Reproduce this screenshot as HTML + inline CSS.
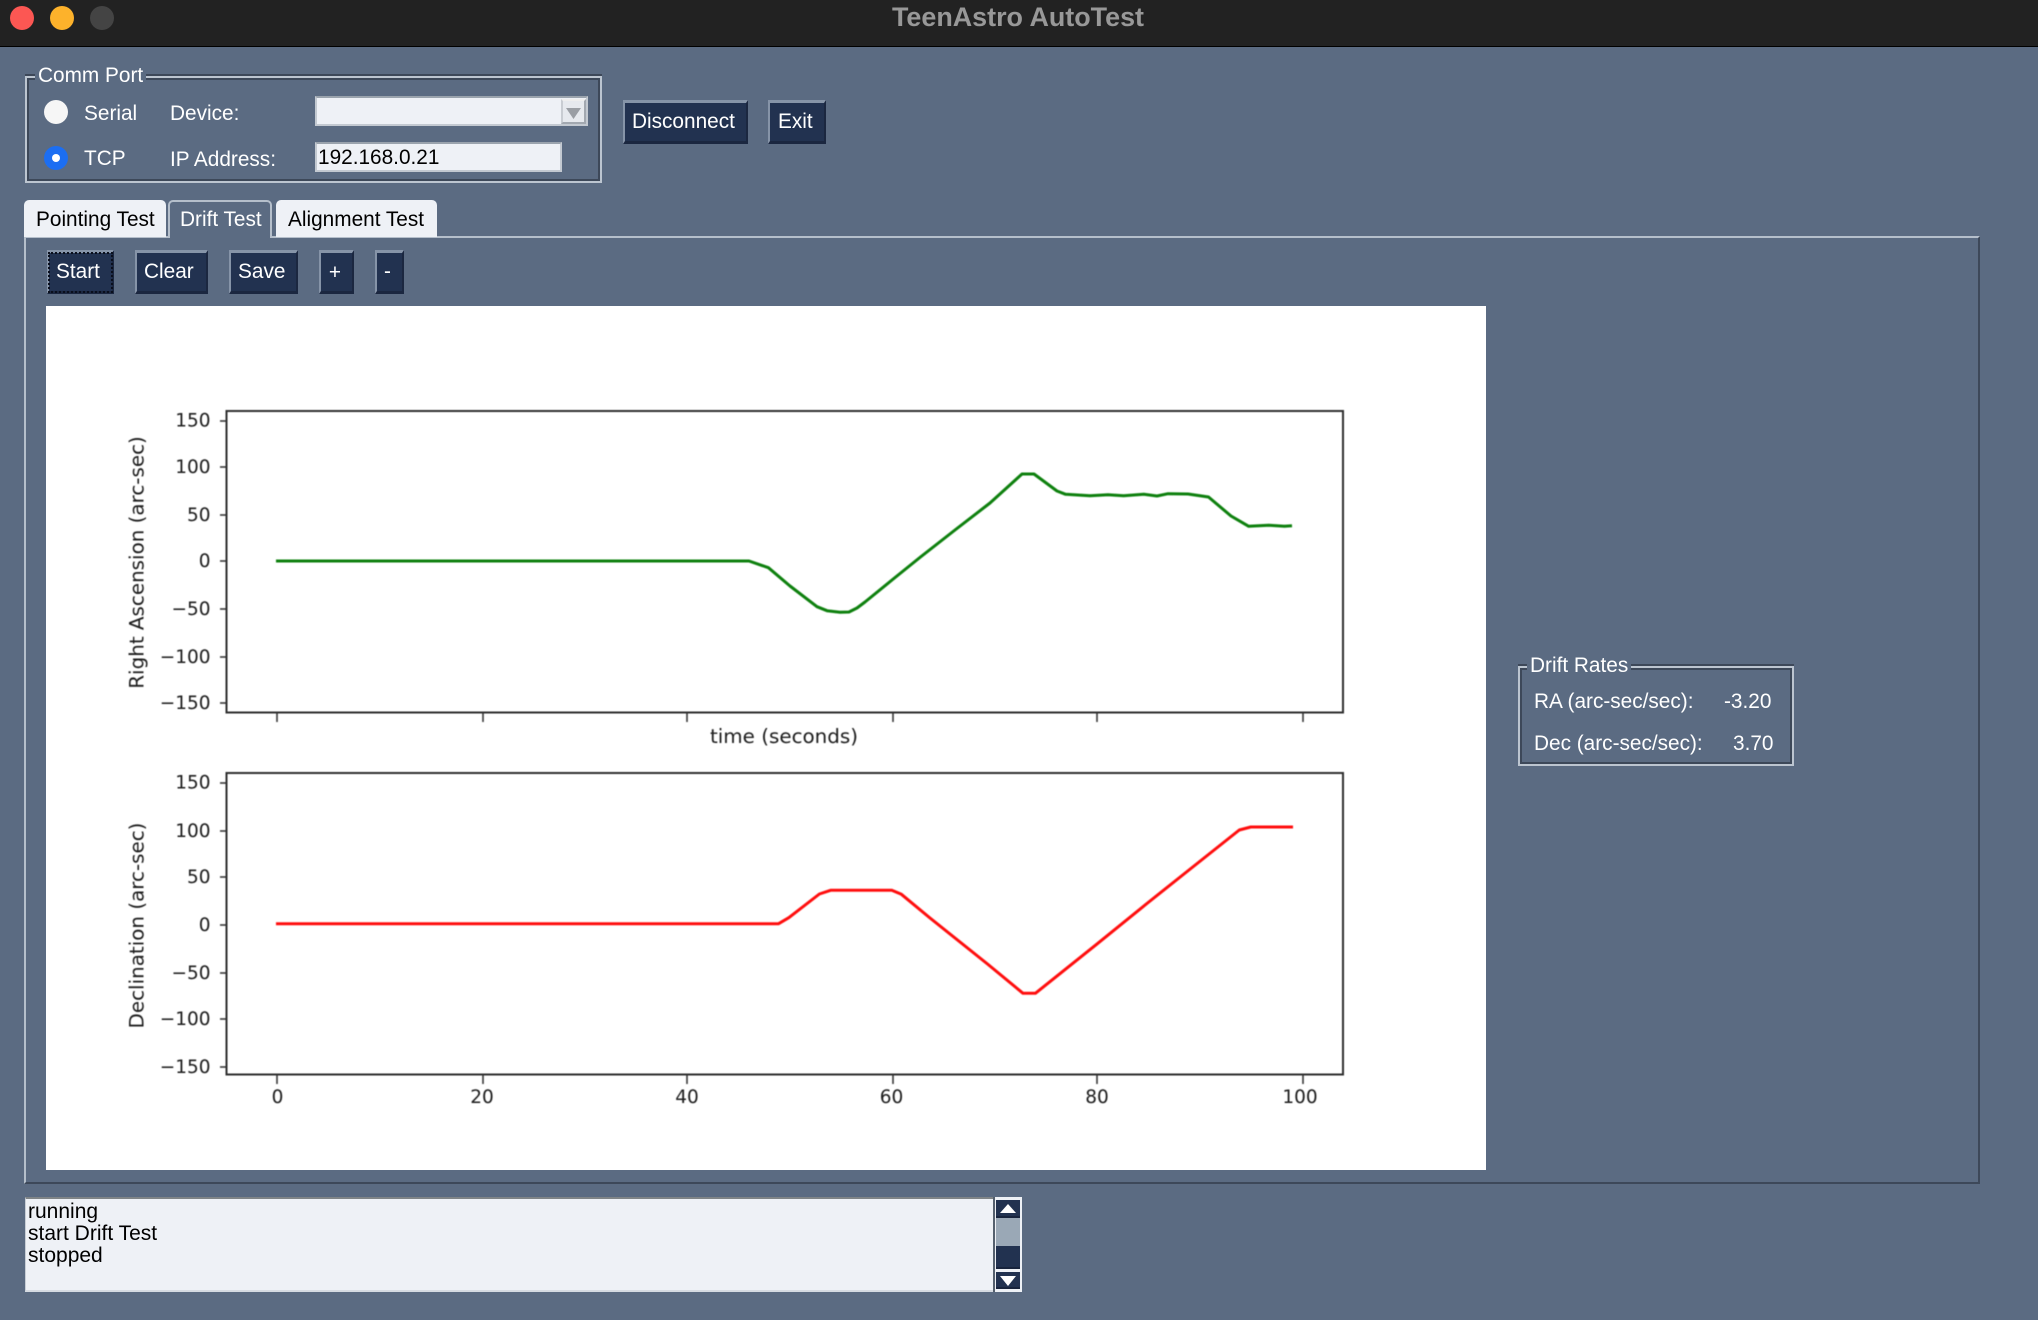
<!DOCTYPE html>
<html><head><meta charset="utf-8"><title>TeenAstro AutoTest</title>
<style>
html,body{margin:0;padding:0;width:2038px;height:1320px;overflow:hidden;background:#5b6b82}
body{position:relative;font-family:"Liberation Sans",sans-serif;font-size:20.8px;color:#fff}
div,span{position:absolute;box-sizing:border-box}
.t{white-space:nowrap;line-height:26px;height:26px}
.frame{border:2px solid #bcc5d0;border-top-color:#bcc5d0;box-shadow:inset 2px 2px 0 #3d4859,-0px -2px 0 #3d4859,inset -2px -2px 0 #3d4859}
.lab{background:#5b6b82;padding:0 3px;white-space:nowrap;line-height:26px;height:26px}
.btn{background:#223250;border-style:solid;border-width:3px 2px 3px 2px;border-color:#8694a8 #1b2740 #1b2740 #8694a8}
.k{color:#000}
.radio{width:24px;height:24px;border-radius:50%}
.tab{border-radius:5px 5px 0 0;top:200px;height:37px}
</style></head><body>

<div style="left:0;top:0;width:2038px;height:46px;background:#222"></div>
<div style="left:0;top:46px;width:2038px;height:1px;background:#000"></div>
<div class="radio" style="left:10px;top:6px;background:#fc5753"></div>
<div class="radio" style="left:50px;top:6px;background:#fdb22b"></div>
<div class="radio" style="left:90px;top:6px;background:#444"></div>
<div class="t" style="left:0;width:2036px;text-align:center;top:3px;font-weight:bold;font-size:26.900px;line-height:28px;height:28px;color:#989898">TeenAstro AutoTest</div>

<!-- Comm Port -->
<div class="frame" style="left:25px;top:76px;width:577px;height:107px"></div>
<div class="lab" style="left:35px;top:63px">Comm Port</div>
<div class="radio" style="left:44px;top:100px;background:#f6f6f6"></div>
<div class="t" style="left:84px;top:101px">Serial</div>
<div class="t" style="left:170px;top:101px">Device:</div>
<div style="left:315px;top:96px;width:273px;height:30px;background:#eef1f6;border:2px solid #c3c9d1;border-top-color:#9aa3ad"></div>
<div style="left:561px;top:99px;width:25px;height:25px;background:#e6e9ee;border:2px solid #a2a8b0;border-top-color:#eee;border-left-color:#c8ccd2"></div>
<svg style="position:absolute;left:561px;top:99px" width="25" height="25"><path d="M5 9H20L12.500 20Z" fill="#9a9ea4"/></svg>
<div class="radio" style="left:44px;top:146px;background:#1c6ef2"></div>
<div style="left:52px;top:154px;width:8px;height:8px;border-radius:50%;background:#fff"></div>
<div class="t" style="left:84px;top:146px">TCP</div>
<div class="t" style="left:170px;top:147px">IP Address:</div>
<div style="left:315px;top:142px;width:247px;height:30px;background:#eef1f6;border:2px solid #c3c9d1;border-top-color:#9aa3ad"></div>
<div class="t k" style="left:318px;top:145px">192.168.0.21</div>

<div class="btn" style="left:623px;top:100px;width:125px;height:44px"></div>
<div class="t" style="left:632px;top:109px">Disconnect</div>
<div class="btn" style="left:768px;top:100px;width:58px;height:44px"></div>
<div class="t" style="left:778px;top:109px">Exit</div>

<!-- Notebook -->
<div style="left:24px;top:236px;width:1956px;height:948px;border:2px solid;border-color:#b5bfcb #3d4859 #3d4859 #b5bfcb"></div>
<div class="tab" style="left:24px;width:142px;background:#eef1f6"></div>
<div class="t k" style="left:36px;top:207px">Pointing Test</div>
<div class="tab" style="left:168px;width:104px;height:38px;background:#5b6b82;border:2px solid #b5bfcb;border-bottom:none"></div>
<div class="t" style="left:180px;top:207px">Drift Test</div>
<div class="tab" style="left:276px;width:161px;background:#eef1f6"></div>
<div class="t k" style="left:288px;top:207px">Alignment Test</div>

<div class="btn" style="left:47px;top:250px;width:67px;height:44px"></div>
<div style="left:48px;top:252px;width:65px;height:41px;border:2px dotted #0a0f1c"></div>
<div class="t" style="left:56px;top:259px">Start</div>
<div class="btn" style="left:135px;top:250px;width:73px;height:44px"></div>
<div class="t" style="left:144px;top:259px">Clear</div>
<div class="btn" style="left:229px;top:250px;width:69px;height:44px"></div>
<div class="t" style="left:238px;top:259px">Save</div>
<div class="btn" style="left:319px;top:250px;width:35px;height:44px"></div>
<div class="t" style="left:317px;width:36px;text-align:center;top:260px">+</div>
<div class="btn" style="left:375px;top:250px;width:29px;height:44px"></div>
<div class="t" style="left:374px;width:27px;text-align:center;top:259px">-</div>

<!-- Canvas -->
<div style="left:46px;top:306px;width:1440px;height:864px;background:#fff"></div>
<svg style="position:absolute;left:0;top:0" width="2038" height="1320" viewBox="0 0 2038 1320">
<defs><filter id="b" x="-5%" y="-5%" width="110%" height="110%"><feGaussianBlur stdDeviation="0.45"/></filter></defs>
<g filter="url(#b)">
<rect x="226.500" y="411" width="1116.500" height="301.500" fill="none" stroke="#2e2e2e" stroke-width="2"/>
<rect x="226.500" y="773" width="1116.500" height="301.500" fill="none" stroke="#2e2e2e" stroke-width="2"/>
<g stroke="#2e2e2e" stroke-width="1.500" fill="none">
<path d="M220 421H226M220 467H226M220 515H226M220 561H226M220 609H226M220 657H226M220 703H226"/>
<path d="M220 783H226M220 831H226M220 877H226M220 925H226M220 973H226M220 1019H226M220 1067H226"/>
<path d="M277 713V722M483 713V722M687 713V722M893 713V722M1097 713V722M1303 713V722"/>
<path d="M277 1075V1084M483 1075V1084M687 1075V1084M893 1075V1084M1097 1075V1084M1303 1075V1084"/>
</g>
<polyline fill="none" stroke="#0b800b" stroke-width="3" stroke-linejoin="round" points="276,561 749,561 768.400,567.700 790,586 817,606.700 827,610.700 840,612.300 849,612 857,608 865,602 892,580 920.500,557 955,530 990,503 1022,474 1034,474 1057,491 1065.600,494.300 1090,495.700 1108,494.700 1123.600,495.700 1143.800,494.300 1157,496 1168,493.700 1188,494 1208.500,497 1231,516 1248.700,526.300 1268.800,525.300 1284.400,526.300 1292,525.700"/>
<polyline fill="none" stroke="#ff0f0f" stroke-width="3" stroke-linejoin="round" points="276,923.700 778.600,923.700 788.800,917.700 819.400,894 830.600,890.300 891.800,890.300 901.400,894.300 930,918 987.500,964 1023,993.300 1035.400,993.300 1096.600,944.300 1146.300,904 1182.700,875 1239.300,830 1250.800,827 1293,827"/>
<g font-family="'DejaVu Sans',sans-serif" font-size="18.500" fill="#1c1c1c">
<g text-anchor="end">
<text x="210.500" y="426.500">150</text><text x="210.500" y="473">100</text><text x="210.500" y="521">50</text><text x="210.500" y="567">0</text><text x="210.500" y="615">−50</text><text x="210.500" y="663">−100</text><text x="210.500" y="709">−150</text>
<text x="210.500" y="788.500">150</text><text x="210.500" y="837">100</text><text x="210.500" y="883">50</text><text x="210.500" y="931">0</text><text x="210.500" y="979">−50</text><text x="210.500" y="1025">−100</text><text x="210.500" y="1073">−150</text>
</g>
<g text-anchor="middle">
<text x="277.500" y="1103">0</text><text x="482" y="1103">20</text><text x="687" y="1103">40</text><text x="891.500" y="1103">60</text><text x="1097" y="1103">80</text><text x="1300" y="1103">100</text>
</g>
</g>
<g font-family="'DejaVu Sans',sans-serif" font-size="19.900" fill="#1c1c1c" text-anchor="middle">
<text x="784" y="743">time (seconds)</text>
<text transform="translate(143.500,562.500) rotate(-90)">Right Ascension (arc-sec)</text>
<text transform="translate(143.500,925.500) rotate(-90)">Declination (arc-sec)</text>
</g>
</g>
</svg>

<!-- Drift Rates -->
<div class="frame" style="left:1518px;top:666px;width:276px;height:100px"></div>
<div class="lab" style="left:1527px;top:653px">Drift Rates</div>
<div class="t" style="left:1534px;top:689px">RA (arc-sec/sec):</div>
<div class="t" style="left:1724px;top:689px">-3.20</div>
<div class="t" style="left:1534px;top:731px">Dec (arc-sec/sec):</div>
<div class="t" style="left:1733px;top:731px">3.70</div>

<!-- Log -->
<div style="left:25px;top:1197px;width:968px;height:95px;background:#eef1f6;border-top:2px solid #7f8487;border-left:1px solid #c8ced6;border-bottom:2px solid #d6dbe2"></div>
<div class="k" style="left:28px;top:1201px;line-height:22px;white-space:pre;font-size:21px">running
start Drift Test
stopped</div>
<div style="left:993px;top:1197px;width:29px;height:95px;background:#eef1f6;border-left:2px solid #55606e"></div>
<div style="left:996px;top:1218px;width:24px;height:28px;background:#9aa8b6"></div>
<div style="left:996px;top:1200px;width:24px;height:18px;background:#223250;border-bottom:2px solid #18243d"></div>
<div style="left:996px;top:1246px;width:24px;height:23px;background:#223250;border-bottom:2px solid #18243d"></div>
<div style="left:996px;top:1272px;width:24px;height:17px;background:#223250;border-bottom:2px solid #18243d"></div>
<svg style="position:absolute;left:996px;top:1200px" width="24" height="90"><path d="M4 13L12 4L20 13Z" fill="#fff"/><path d="M4 76L20 76L12 86Z" fill="#fff"/></svg>

</body></html>
